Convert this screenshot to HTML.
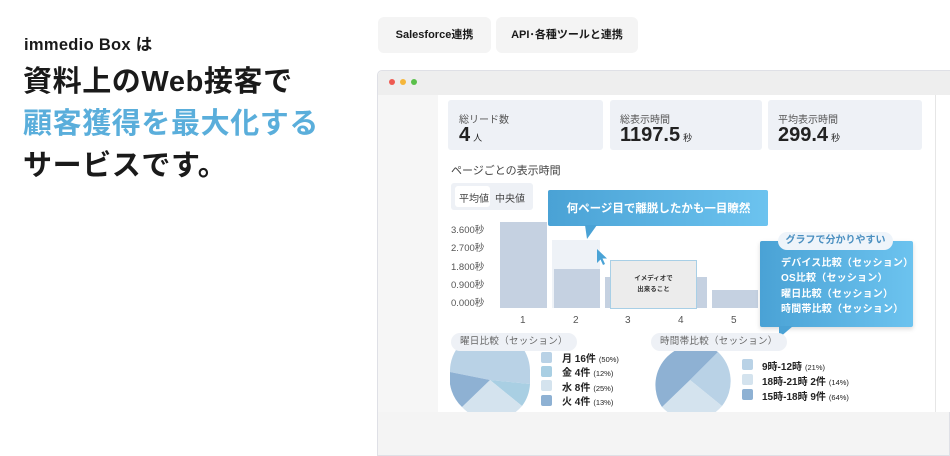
<!DOCTYPE html>
<html><head><meta charset="utf-8"><style>
*{margin:0;padding:0;box-sizing:border-box}
body{width:950px;height:456px;overflow:hidden;background:#fff;position:relative;font-family:"Liberation Sans","Noto Sans CJK JP",sans-serif;color:#1a1a1a}
.a{position:absolute;white-space:nowrap}
.b{font-weight:700}
.card{position:absolute;background:#eef1f6;border-radius:3px}
.lab{font-size:10px;color:#555}
.val{font-size:20px;font-weight:700;color:#222}
.val small{font-size:9px;font-weight:400;margin-left:3px}
.yl{font-size:9.5px;color:#555}
.xl{font-size:10px;color:#555}
.bar{position:absolute;background:#c5d1e1}
.pill{position:absolute;background:#eef1f6;border-radius:9px;font-size:9.5px;color:#666;padding:0 9px;line-height:18px;letter-spacing:0.3px}
.sq{position:absolute;width:11px;height:11px;border-radius:2px}
.lg{font-size:10px;font-weight:700;color:#222}
.lg small{font-size:7.5px;font-weight:400;margin-left:3px}
</style></head><body>
<div class="a b" style="left:24px;top:31px;font-size:16.5px;letter-spacing:0.3px">immedio Box は</div>
<div class="a b" style="left:23px;top:61px;font-size:29px;line-height:42px;letter-spacing:0.6px">資料上のWeb接客で<br><span style="color:#5aaedb">顧客獲得を最大化する</span><br>サービスです。</div>

<div class="a b" style="left:378px;top:17px;width:113px;height:36px;background:#f4f4f4;border-radius:6px;font-size:11px;line-height:36px;text-align:center">Salesforce連携</div>
<div class="a b" style="left:496px;top:17px;width:142px;height:36px;background:#f4f4f4;border-radius:6px;font-size:11px;line-height:36px;text-align:center">API･各種ツールと連携</div>

<div class="a" style="left:377px;top:70px;width:573px;height:386px;background:#f4f4f4;border:1px solid #dfe0e6;border-radius:5px 0 0 0"></div>
<div class="a" style="left:378px;top:71px;width:572px;height:24px;background:#eeeeee;border-radius:5px 0 0 0"></div>
<div class="a" style="left:389px;top:79px;width:6px;height:6px;border-radius:50%;background:#ee5a52"></div>
<div class="a" style="left:400px;top:79px;width:6px;height:6px;border-radius:50%;background:#f5b63a"></div>
<div class="a" style="left:411px;top:79px;width:6px;height:6px;border-radius:50%;background:#5ac04a"></div>
<div class="a" style="left:378px;top:95px;width:60px;height:317px;background:#f6f6f6"></div>
<div class="a" style="left:438px;top:95px;width:497px;height:317px;background:#fff"></div>
<div class="a" style="left:935px;top:95px;width:15px;height:317px;background:#fff;border-left:1px solid #e6e6e6"></div>

<div class="card" style="left:448px;top:100px;width:155px;height:50px"></div>
<div class="a lab" style="left:459px;top:111px">総リード数</div>
<div class="a val" style="left:459px;top:124px">4<small>人</small></div>
<div class="card" style="left:610px;top:100px;width:152px;height:50px"></div>
<div class="a lab" style="left:620px;top:111px">総表示時間</div>
<div class="a val" style="left:620px;top:124px">1197.5<small>秒</small></div>
<div class="card" style="left:768px;top:100px;width:154px;height:50px"></div>
<div class="a lab" style="left:778px;top:111px">平均表示時間</div>
<div class="a val" style="left:778px;top:124px">299.4<small>秒</small></div>

<div class="a" style="left:451px;top:162px;font-size:11px;color:#444">ページごとの表示時間</div>
<div class="card" style="left:451px;top:183px;width:82px;height:27px"></div>
<div class="a" style="left:455px;top:186px;width:35px;height:21px;background:#fff;border-radius:3px"></div>
<div class="a" style="left:459px;top:190px;font-size:10px;color:#444">平均値</div>
<div class="a" style="left:495px;top:190px;font-size:10px;color:#444">中央値</div>

<div class="a yl" style="left:451px;top:222px">3.600秒</div>
<div class="a yl" style="left:451px;top:240px">2.700秒</div>
<div class="a yl" style="left:451px;top:259px">1.800秒</div>
<div class="a yl" style="left:451px;top:277px">0.900秒</div>
<div class="a yl" style="left:451px;top:295px">0.000秒</div>

<div class="bar" style="left:500px;top:222px;width:47px;height:86px"></div>
<div class="a" style="left:552px;top:240px;width:48px;height:68px;background:#eef2f7"></div>
<div class="bar" style="left:554px;top:269px;width:46px;height:39px"></div>
<div class="bar" style="left:605px;top:277px;width:102px;height:31px"></div>
<div class="a" style="left:610px;top:260px;width:87px;height:49px;background:#ececec;border:1.5px solid #a8cfe6"></div>
<div class="a" style="left:610px;top:273px;width:87px;text-align:center;font-size:6.5px;line-height:11px;font-weight:700;color:#333">イメディオで<br>出来ること</div>
<div class="bar" style="left:712px;top:290px;width:46px;height:18px"></div>
<svg class="a" style="left:595px;top:248px" width="14" height="20"><path d="M2 1 L2 15 L5.5 11.5 L8 17 L10 16 L7.5 10.5 L12 10.5 Z" fill="#4aa3d6"/></svg>

<div class="a xl" style="left:520px;top:315px">1</div>
<div class="a xl" style="left:573px;top:315px">2</div>
<div class="a xl" style="left:625px;top:315px">3</div>
<div class="a xl" style="left:678px;top:315px">4</div>
<div class="a xl" style="left:731px;top:315px">5</div>

<div class="a" style="left:548px;top:190px;width:220px;height:36px;background:linear-gradient(90deg,#4aa2d5,#6cc3ef);border-radius:2px"></div>
<svg class="a" style="left:585px;top:225px" width="12" height="14"><path d="M0 0 L12 0 L2 14 Z" fill="#4aa2d5"/></svg>
<div class="a b" style="left:556px;top:200px;width:205px;text-align:center;font-size:11.5px;color:#fff">何ページ目で離脱したかも一目瞭然</div>

<div class="a" style="left:760px;top:241px;width:153px;height:86px;background:linear-gradient(90deg,#4aa2d5,#6cc3ef);border-radius:2px;box-shadow:0 2px 5px rgba(0,0,0,.15)"></div>
<svg class="a" style="left:779px;top:326px" width="14" height="12"><path d="M0 0 L14 0 L0 12 Z" fill="#4aa2d5"/></svg>
<div class="a" style="left:778px;top:232px;width:115px;height:18px;background:#eef4fa;border-radius:9px;font-size:10px;line-height:18px;text-align:center;color:#4a8fc0;font-weight:700">グラフで分かりやすい</div>
<div class="a b" style="left:781px;top:256px;font-size:10px;line-height:15.3px;color:#fff;letter-spacing:0.2px">デバイス比較（セッション）<br>OS比較（セッション）<br>曜日比較（セッション）<br>時間帯比較（セッション）</div>

<svg class="a" style="left:450px;top:340px" width="82" height="72"><path d="M40 40 L0 32 A40 40 0 0 1 80 30 L80 44 Z" fill="#b9d2e6"/><path d="M40 40 L80 44 A40 40 0 0 1 72 66 Z" fill="#a9cfe3"/><path d="M40 40 L72 66 A40 40 0 0 1 12 67 Z" fill="#d4e3ee"/><path d="M40 40 L12 67 A40 40 0 0 1 0 32 Z" fill="#8eb1d3"/></svg>
<div class="pill" style="left:451px;top:333px">曜日比較（セッション）</div>
<div class="sq" style="left:541px;top:352px;background:#b9d2e6"></div>
<div class="sq" style="left:541px;top:366px;background:#a9cfe3"></div>
<div class="sq" style="left:541px;top:380px;background:#d4e3ee"></div>
<div class="sq" style="left:541px;top:395px;background:#8eb1d3"></div>
<div class="a lg" style="left:562px;top:350px">月 16件<small>(50%)</small></div>
<div class="a lg" style="left:562px;top:364px">金 4件<small>(12%)</small></div>
<div class="a lg" style="left:562px;top:379px">水 8件<small>(25%)</small></div>
<div class="a lg" style="left:562px;top:393px">火 4件<small>(13%)</small></div>

<svg class="a" style="left:650px;top:340px" width="82" height="72"><path d="M40 40 L68 12 A40 40 0 0 1 72 66 Z" fill="#b9d2e6"/><path d="M40 40 L72 66 A40 40 0 0 1 12 67 Z" fill="#d4e3ee"/><path d="M40 40 L12 67 A40 40 0 0 1 68 12 Z" fill="#8eb1d3"/></svg>
<div class="pill" style="left:651px;top:333px">時間帯比較（セッション）</div>
<div class="sq" style="left:742px;top:359px;background:#b9d2e6"></div>
<div class="sq" style="left:742px;top:374px;background:#d4e3ee"></div>
<div class="sq" style="left:742px;top:389px;background:#8eb1d3"></div>
<div class="a lg" style="left:762px;top:358px">9時-12時<small>(21%)</small></div>
<div class="a lg" style="left:762px;top:373px">18時-21時 2件<small>(14%)</small></div>
<div class="a lg" style="left:762px;top:388px">15時-18時 9件<small>(64%)</small></div>
</body></html>
